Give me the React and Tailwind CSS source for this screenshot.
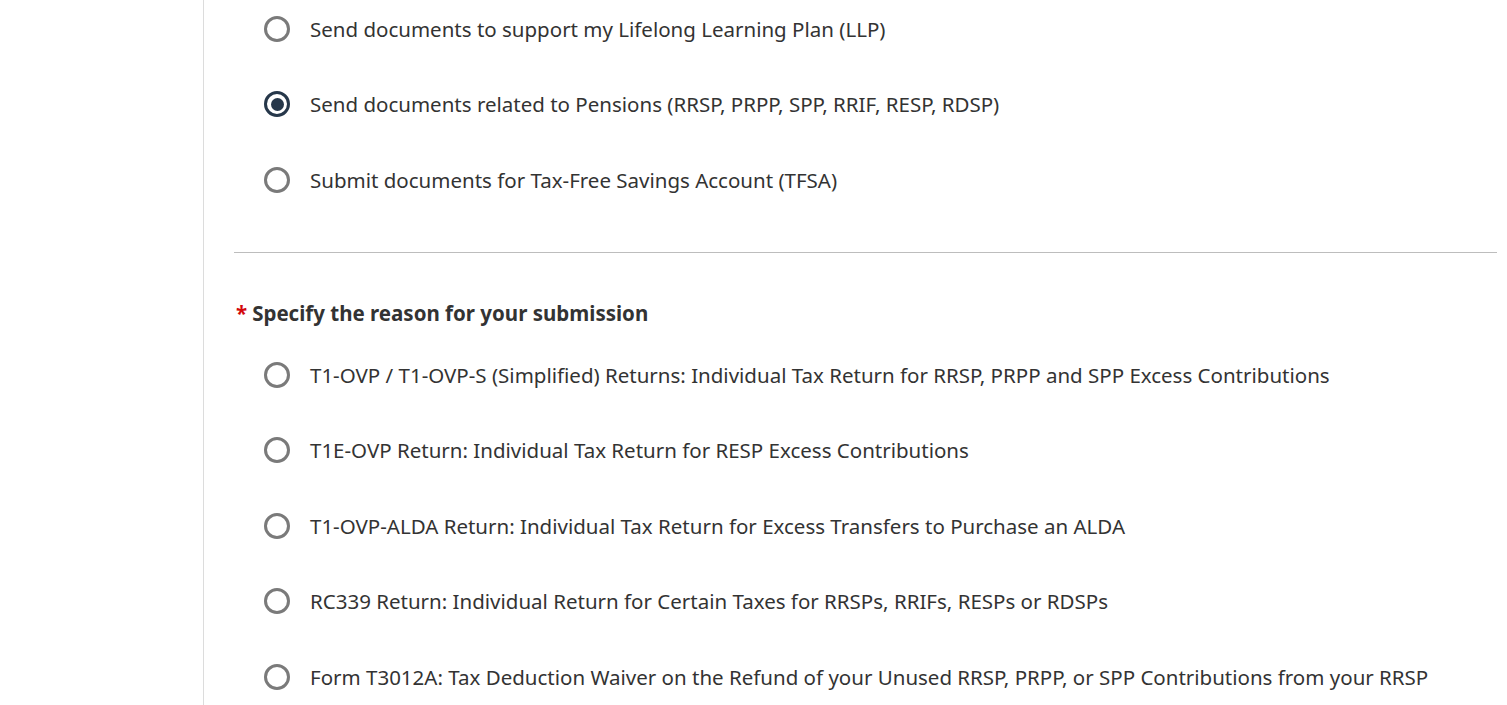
import React from "react";

function Radio({ checked }) {
  return (
    <span
      className={
        "flex h-[26px] w-[26px] shrink-0 items-center justify-center rounded-full border-[3px] bg-white " +
        (checked ? "border-[#26374a]" : "border-[#7a7a7a]")
      }
    >
      {checked && <span className="h-[13px] w-[13px] rounded-full bg-[#26374a]" />}
    </span>
  );
}

function Option({ label, checked }) {
  return (
    <label className="flex h-[75.6px] items-center gap-[20px] pl-[30px]">
      <Radio checked={checked} />
      <span className="text-[20.5px] leading-[30px] text-[#333]">{label}</span>
    </label>
  );
}

export default function App() {
  const first = [
    ["Send documents to support my Lifelong Learning Plan (LLP)", false],
    ["Send documents related to Pensions (RRSP, PRPP, SPP, RRIF, RESP, RDSP)", true],
    ["Submit documents for Tax-Free Savings Account (TFSA)", false],
  ];
  const second = [
    "T1-OVP / T1-OVP-S (Simplified) Returns: Individual Tax Return for RRSP, PRPP and SPP Excess Contributions",
    "T1E-OVP Return: Individual Tax Return for RESP Excess Contributions",
    "T1-OVP-ALDA Return: Individual Tax Return for Excess Transfers to Purchase an ALDA",
    "RC339 Return: Individual Return for Certain Taxes for RRSPs, RRIFs, RESPs or RDSPs",
    "Form T3012A: Tax Deduction Waiver on the Refund of your Unused RRSP, PRPP, or SPP Contributions from your RRSP",
  ];
  return (
    <div
      className="flex h-[705px] w-[1507px] overflow-hidden bg-white"
      style={{ fontFamily: '"Noto Sans", "Open Sans", sans-serif' }}
    >
      <div className="w-[204px] shrink-0 border-r border-[#dcdcdc]" />
      <div className="flex-1 pl-[30px] pr-[10px]">
        <div className="-mt-[9px]">
          {first.map(([l, c]) => (
            <Option key={l} label={l} checked={c} />
          ))}
        </div>
        <div className="mt-[34px] border-t border-[#bdbdbd]" />
        <div className="mt-[45px] flex items-center pl-[2px] text-[20.5px] font-bold leading-[30px] text-[#333]">
          <span className="mr-[5px] text-[#d3080c]">*</span>
          Specify the reason for your submission
        </div>
        <div className="mt-[9px]">
          {second.map((l) => (
            <Option key={l} label={l} checked={false} />
          ))}
        </div>
      </div>
    </div>
  );
}
